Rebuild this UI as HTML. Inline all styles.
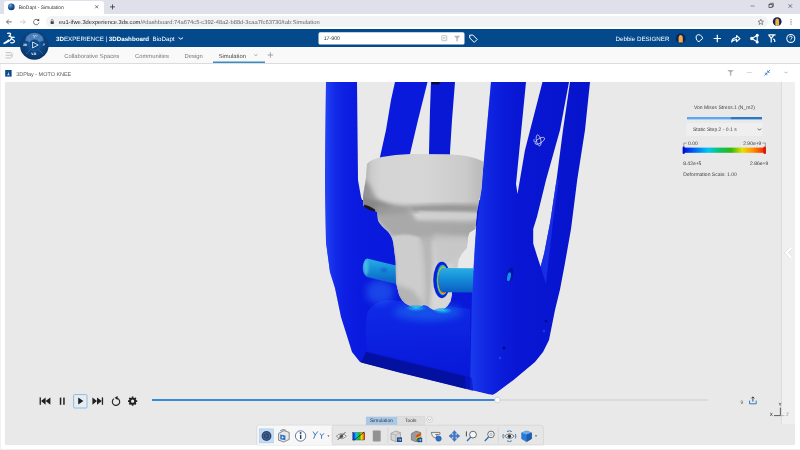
<!DOCTYPE html>
<html><head><meta charset="utf-8"><title>BioDapt - Simulation</title>
<style>
html,body{margin:0;padding:0;}
body{width:800px;height:450px;overflow:hidden;position:relative;background:#fff;font-family:"Liberation Sans",sans-serif;color:#333;text-rendering:geometricPrecision;}
.a{position:absolute;white-space:nowrap;line-height:1;}
#tabbar{left:0;top:0;width:800px;height:14.5px;background:#dee1e9;}
#tab{left:4px;top:1px;width:99.5px;height:13.5px;background:#fff;border-radius:3px 3px 0 0;}
#toolbar{left:0;top:14px;width:800px;height:15.5px;background:#fff;}
#pill{left:45.5px;top:15.9px;width:722px;height:11.3px;border-radius:6px;background:#f1f3f4;}
#hdr{left:0;top:29.2px;width:800px;height:17.8px;background:#03498b;}
#nav{left:0;top:47px;width:800px;height:16.6px;background:#f9f9f9;border-bottom:1px solid #dcdcdc;box-sizing:border-box;}
#view{left:5.1px;top:82px;width:790px;height:362.8px;background:#e9e9e9;}
#rstrip{left:781.2px;top:82px;width:13.5px;height:342px;background:#f0f0f0;border-left:1px solid #dcdcdc;box-sizing:border-box;}
.t5{font-size:5.4px;}
.t6{font-size:6.2px;}
.w{color:#fff;}
div.a:not(:empty){filter:grayscale(1);}
svg text{filter:grayscale(1);}
</style></head><body>
<div class="a" id="tabbar"></div>
<div class="a" id="tab"></div>
<div class="a" id="toolbar"></div>
<div class="a" id="pill"></div>
<div class="a" id="hdr"></div>
<div class="a" id="nav"></div>
<div class="a" id="view"></div>
<div class="a" id="rstrip"></div>
<div class="a" style="left:0;top:64px;width:1px;height:386px;background:#f1f1f1"></div>
<div class="a" style="left:0;top:448.7px;width:800px;height:1.3px;background:#efefef"></div>


<!-- CHROME UI -->
<svg class="a" style="left:0;top:0" width="800" height="82" viewBox="0 0 800 82">
<defs>
<radialGradient id="fav" cx="0.35" cy="0.3" r="0.8"><stop offset="0" stop-color="#6fa0d8"/><stop offset="0.5" stop-color="#1d5a9e"/><stop offset="1" stop-color="#0a2f66"/></radialGradient>
<radialGradient id="cmp" cx="0.5" cy="0.4" r="0.65"><stop offset="0" stop-color="#165a9c"/><stop offset="0.6" stop-color="#0b427e"/><stop offset="1" stop-color="#07305f"/></radialGradient>
</defs>
<!-- favicon -->
<circle cx="11.3" cy="6.9" r="3.3" fill="url(#fav)"/>
<!-- tab close -->
<path d="M95.2,5.3 l3,3 m0,-3 l-3,3" stroke="#444" stroke-width="0.7" fill="none"/>
<!-- new tab plus -->
<path d="M110,6.9 h5 m-2.5,-2.5 v5" stroke="#333" stroke-width="0.8" fill="none"/>
<!-- window controls -->
<path d="M750.5,6 h4" stroke="#555" stroke-width="0.6"/>
<rect x="769" y="4.3" width="3.2" height="3.2" fill="none" stroke="#333" stroke-width="0.7"/>
<path d="M770.2,4.3 v-1 h3.2 v3.2 h-1.2" fill="none" stroke="#333" stroke-width="0.6"/>
<path d="M788.5,4.2 l3.6,3.6 m0,-3.6 l-3.6,3.6" stroke="#333" stroke-width="0.6" fill="none"/>
<!-- nav arrows -->
<path d="M11.8,21.9 h-5.2 m2.3,-2.4 l-2.4,2.4 l2.4,2.4" stroke="#444" stroke-width="0.75" fill="none"/>
<path d="M20,21.9 h5.2 m-2.3,-2.4 l2.4,2.4 l-2.4,2.4" stroke="#bbb" stroke-width="0.75" fill="none"/>
<path d="M38.3,20.3 a2.7,2.7 0 1 0 0.6,2.3" stroke="#444" stroke-width="0.75" fill="none"/>
<path d="M39.2,18.6 v2.4 h-2.4 z" fill="#444"/>
<!-- lock -->
<rect x="50.6" y="21.2" width="3.2" height="2.7" rx="0.4" fill="#444"/>
<path d="M51.3,21.3 v-1 a0.9,0.9 0 0 1 1.8,0 v1" stroke="#444" stroke-width="0.55" fill="none"/>
<!-- star -->
<path d="M760.8,19.3 l0.8,1.8 l1.9,0.2 l-1.4,1.3 l0.4,1.9 l-1.7,-1 l-1.7,1 l0.4,-1.9 l-1.4,-1.3 l1.9,-0.2 z" fill="none" stroke="#444" stroke-width="0.6"/>
<!-- browser avatar -->
<circle cx="777.2" cy="21.6" r="4.4" fill="#12205c"/>
<path d="M775.3,25.4 v-4.6 a1.9,2.3 0 0 1 3.8,0 v4.6 z" fill="#f0b040"/>
<rect x="776" y="24.4" width="2.4" height="1.3" fill="#b8d090"/>
<!-- menu dots -->
<circle cx="791" cy="19.7" r="0.55" fill="#555"/><circle cx="791" cy="21.9" r="0.55" fill="#555"/><circle cx="791" cy="24.1" r="0.55" fill="#555"/>

<!-- header: 3DS logo -->
<g stroke="#fff" fill="none" stroke-width="1.25" stroke-linecap="round">
<path d="M7.6,33.4 q2.6,-0.8 3,0.6 q0.2,1.4 -2,2.4 q3,-0.4 2.8,1.8 q-0.6,2.6 -5.2,4.4 l-2.6,1 q3.6,-2.4 5,-3.6"/>
<path d="M14.2,37.4 q-2.4,-0.6 -2.6,0.8 q0,1 1.6,1.6 q1.6,0.8 1.2,2 q-0.8,1.4 -3.6,0.8"/>
</g>
<!-- compass -->
<circle cx="34.3" cy="45.5" r="14.3" fill="url(#cmp)"/>
<path d="M25.2,40.6 Q26.6,33.4 34.4,32.8 Q42.2,33.4 43.8,40.6 L39,42.2 A5.8,5.8 0 0 0 30,42.2 Z" fill="#5b8cc4" opacity="0.8"/>
<path d="M26.3,36.2 L30.6,40.8 M42.7,36.2 L38.4,40.8 M26.3,53.8 L30.6,49.2 M42.7,53.8 L38.4,49.2" stroke="#7fa8d6" stroke-width="0.45" opacity="0.8"/>
<circle cx="34.5" cy="45" r="5.6" fill="#0d4a8c" stroke="#2a6cb0" stroke-width="0.5"/>
<path d="M32.6,42 L38.2,45 L32.6,48 Z" fill="none" stroke="#fff" stroke-width="0.8" stroke-linejoin="round"/>
<text x="22.9" y="46.2" font-family="Liberation Sans, sans-serif" font-size="3.3" font-weight="bold" fill="#fff">3D</text>
<text x="31.2" y="55" font-family="Liberation Sans, sans-serif" font-size="3.3" font-weight="bold" fill="#fff">V.R</text>
<text x="42.8" y="46.2" font-family="Liberation Sans, sans-serif" font-size="3.3" font-weight="bold" font-style="italic" fill="#dfe8f4">i²</text>
<path d="M33,35 l1.2,1.6 l1.4,-1.8 m-1.4,1.8 v1.6 M35.6,35.4 l0.8,1 l1,-1.2" stroke="#fff" stroke-width="0.5" fill="none"/>
<!-- search box -->
<rect x="318.5" y="32.3" width="146" height="12.3" rx="1.6" fill="#fff"/>
<rect x="441.8" y="35.7" width="5" height="5" rx="0.6" fill="none" stroke="#b5b5b5" stroke-width="0.8"/>
<path d="M443,36.9 l2.6,2.6 m0,-2.6 l-2.6,2.6" stroke="#b5b5b5" stroke-width="0.7"/>
<path d="M454,35.8 h6.2 l-2.4,2.6 v2.8 h-1.4 v-2.8 z" fill="#b5b5b5"/>
<!-- tag -->
<path d="M469.6,35.2 l3.2,-0.2 l4.4,4.4 l-3,3 l-4.4,-4.4 z" fill="none" stroke="#fff" stroke-width="1" stroke-linejoin="round"/>
<!-- dropdown chevron after BioDapt -->
<path d="M178.6,37.6 l2.2,1.6 l2.2,-1.6" stroke="#fff" stroke-width="1" fill="none"/>
<!-- header avatar -->
<circle cx="680.7" cy="38.5" r="4.9" fill="#12205c"/>
<path d="M678.6,42.6 v-5 a2.1,2.5 0 0 1 4.2,0 v5 z" fill="#f0b040"/>
<!-- bell/notification -->
<path d="M696.2,36 q1.8,-2.4 4.2,-0.8 q2.2,1.4 2.2,3.2 q-0.4,1.2 -1.8,1.4 l-1.4,1.8 q-1.6,0 -2.6,-1.4 q-1,-2.2 -0.6,-4.2 z" fill="none" stroke="#fff" stroke-width="1" stroke-linejoin="round"/>
<!-- plus -->
<path d="M713.6,38.5 h7.4 m-3.7,-3.7 v7.4" stroke="#fff" stroke-width="1.2" fill="none"/>
<!-- share arrow -->
<path d="M731.6,42 q0.6,-4.2 5,-4.4 v-2 l3.4,3 l-3.4,3 v-2 q-3,-0.2 -5,2.4 z" fill="none" stroke="#fff" stroke-width="1.15" stroke-linejoin="round"/>
<!-- network -->
<path d="M751.6,38.5 l5.6,-3 m-5.6,3 l5.6,3.2 m0,-6.2 v6.2" stroke="#fff" stroke-width="1.1" fill="none"/>
<circle cx="751.8" cy="38.5" r="1.7" fill="#fff"/><circle cx="757.2" cy="35.3" r="1.5" fill="#fff"/><circle cx="757.2" cy="41.9" r="1.5" fill="#fff"/>
<!-- Y tools -->
<path d="M768.6,34.8 l2.6,3.6 v4 m0,-4 l2.8,-3.6 m-5.6,0 h7.2 m-2.4,4.4 q1.8,0.2 1.6,2.8" stroke="#fff" stroke-width="1.2" fill="none"/>
<!-- help -->
<circle cx="790.8" cy="38.5" r="4" fill="none" stroke="#fff" stroke-width="1.05"/>
<path d="M789.5,37.4 a1.3,1.3 0 1 1 1.9,1.2 q-0.6,0.4 -0.6,1.1" stroke="#fff" stroke-width="1" fill="none"/><circle cx="790.8" cy="40.9" r="0.45" fill="#fff"/>
<!-- nav row: hamburger -->
<path d="M5.6,52.6 h5 q1.6,0.2 1.7,2.6 q-0.1,2.4 -1.7,2.7 h-5 m0,-2.65 h6" stroke="#aaa" stroke-width="0.7" fill="none"/>
<!-- active tab underline -->
<rect x="213" y="61.5" width="52" height="1.5" fill="#368ec4"/>
<path d="M254.2,54.4 l1.6,1.3 l1.6,-1.3" stroke="#777" stroke-width="0.6" fill="none"/>
<path d="M267.6,55 h5.6 m-2.8,-2.8 v5.6" stroke="#888" stroke-width="0.7" fill="none"/>
<!-- widget header -->
<rect x="5.2" y="70" width="6.4" height="6.6" fill="#0d4a8c"/>
<path d="M7,75.2 q1.2,-0.4 1.4,-3.6 q0.2,3.2 1.6,3.6 z" fill="#cfe0f4"/>
<path d="M727.4,69.9 h6.4 l-2.5,2.6 v3.3 h-1.4 v-3.3 z" fill="#b4b4b4"/>
<path d="M746.8,72.6 h5" stroke="#c4c4c4" stroke-width="0.7"/>
<path d="M764.4,75.6 l2.4,-2.4 m0.9,-0.9 l2.4,-2.4 M764.8,73.2 h2 v2 M767.7,70.3 v2 h2" stroke="#2a7cc4" stroke-width="0.8" fill="none"/>
<path d="M784.4,72 q1.7,1.9 3.4,0" stroke="#999" stroke-width="0.6" fill="none"/>
</svg>

<!-- MODEL -->
<svg class="a" id="model" style="left:0;top:0" width="800" height="450" viewBox="0 0 800 450">
<defs>
<linearGradient id="gblue" x1="326" y1="0" x2="590" y2="0" gradientUnits="userSpaceOnUse">
<stop offset="0" stop-color="#1228ec"/><stop offset="0.12" stop-color="#0a1ade"/><stop offset="0.6" stop-color="#0918d8"/><stop offset="1" stop-color="#0714cc"/>
</linearGradient>
<linearGradient id="gcup" x1="362" y1="0" x2="484" y2="0" gradientUnits="userSpaceOnUse">
<stop offset="0" stop-color="#c2c2c2"/><stop offset="0.15" stop-color="#d4d4d4"/><stop offset="0.5" stop-color="#d6d6d6"/><stop offset="0.85" stop-color="#cacaca"/><stop offset="1" stop-color="#b8b8b8"/>
</linearGradient>
<linearGradient id="gcupv" x1="0" y1="156" x2="0" y2="240" gradientUnits="userSpaceOnUse">
<stop offset="0" stop-color="#000" stop-opacity="0"/><stop offset="0.45" stop-color="#000" stop-opacity="0.02"/><stop offset="0.62" stop-color="#000" stop-opacity="0.18"/><stop offset="0.8" stop-color="#000" stop-opacity="0.08"/><stop offset="1" stop-color="#000" stop-opacity="0.03"/>
</linearGradient>
<linearGradient id="gpin" x1="0" y1="0" x2="0" y2="1">
<stop offset="0" stop-color="#2aaee4"/><stop offset="0.4" stop-color="#1690d8"/><stop offset="1" stop-color="#0a5cc4"/>
</linearGradient>
<radialGradient id="gglow" cx="0.5" cy="0.3" r="0.6">
<stop offset="0" stop-color="#20d8e8" stop-opacity="0.95"/><stop offset="0.5" stop-color="#1490ee" stop-opacity="0.6"/><stop offset="1" stop-color="#0b30e0" stop-opacity="0"/>
</radialGradient>
</defs>
<!-- silhouette -->
<path fill="url(#gblue)" d="M326,82 L590,82 L585,130 L577.2,180 L571,229 L565,263 L560,289.5 L555,310 L549,340 L543,352 L535,362 L513.5,380 L496,393 L492.8,394.8 L489,394.2 L440,382.2 L400,372.3 L360,362 L352,352 L341,317 L335,288 L330,272 L326,242 L325,180 Z"/>
<!-- inner opening -->
<path fill="#e9e9e9" d="M357,82 L491,82 L484,160 L480,200 L362,200 L361,197 L358,180 Z"/>
<!-- back beams -->
<path fill="#0a1adc" d="M395,82 L427.5,82 L418,120 L410,154 L408,165 L378,165 L380,157 L386,130 L391,100 Z"/>
<path fill="#0918d4" d="M431,82 L455,82 L452,120 L450,152 L450,165 L429,165 L429,152 L430,110 Z"/>
<path fill="#05082a" d="M431.5,82 L440,82 L439,84.6 L432,84.2 Z"/>
<!-- right plate windows -->
<path fill="#e9e9e9" d="M526,82 L542.5,82 L525,150 L517.5,194 L516,184 Z"/>
<path fill="#e9e9e9" d="M569,82 L570,82 L563,130 L556.5,180 L550.3,221.6 L544.2,253.3 L540.6,266.8 L537,255.8 L533.2,243.6 L533.2,229 L537,216.7 L546,180 L560,130 Z"/>
<path fill="#1c36ec" opacity="0.75" d="M556.5,180 L550.3,221.6 L544.2,253.3 L540.6,266.8 L546,284 L548.4,262 L553,222 L558.6,180 Z"/>
<!-- inner dark face of window -->

<!-- bg gap right of stem -->
<path fill="#e9e9e9" d="M476.2,226 L473.6,270 L450,270 L449,262 L455,256 L459,250 L463,244 L464,235 L466,229 Z"/>
<!-- lower drum lighter zone -->
<linearGradient id="gdrum" x1="0" y1="300" x2="0" y2="372" gradientUnits="userSpaceOnUse"><stop offset="0" stop-color="#1638f0" stop-opacity="0.6"/><stop offset="0.5" stop-color="#1030e8" stop-opacity="0.4"/><stop offset="1" stop-color="#0b20dc" stop-opacity="0.15"/></linearGradient>
<path fill="url(#gdrum)" d="M367,314 Q372,301 390,300 L470,309 L470,374 L367,351 Q364,330 367,314 Z"/>
<!-- right plate highlight -->
<linearGradient id="gpl" x1="472" y1="0" x2="520" y2="0" gradientUnits="userSpaceOnUse"><stop offset="0" stop-color="#2048f4" stop-opacity="0.7"/><stop offset="0.4" stop-color="#1838ee" stop-opacity="0.35"/><stop offset="1" stop-color="#0b20dc" stop-opacity="0"/></linearGradient>
<path fill="url(#gpl)" d="M491,82 L526,82 L516,184 L520,260 L520,375 L493,394.6 L470,389.6 L472,292 L475,242 L481,192 Z"/>
<!-- left beam highlight -->
<linearGradient id="glb" x1="325" y1="0" x2="345" y2="0" gradientUnits="userSpaceOnUse"><stop offset="0" stop-color="#2448f6" stop-opacity="0.9"/><stop offset="1" stop-color="#0b20dc" stop-opacity="0"/></linearGradient>
<path fill="url(#glb)" d="M326,82 L345,82 L345,240 L350,280 L372,365 L360,362 L352,352 L341,317 L335,288 L330,272 L326,242 L325,180 Z"/>
<!-- glow near left pin base -->
<ellipse cx="380" cy="292" rx="14" ry="12" fill="#2a70f4" opacity="0.5" filter="url(#b3)"/>
<!-- dark band bottom -->
<path fill="#0411a0" d="M366,352 L465,376 L466,389 L440,382.6 L400,372.8 L361,362.6 Z"/>
<path fill="#0612b4" opacity="0.6" d="M465,376 L472,378 L473,391 L466,389 Z"/>
<ellipse cx="428" cy="312" rx="34" ry="9" fill="#1a70f0" opacity="0.55" filter="url(#b3)"/>
<!-- pin left -->
<path fill="url(#gpin)" d="M367,258.5 L398,266 L398,284.5 L367,277 Q362.5,274 362.8,267 Q363.5,260 367,258.5 Z"/>
<clipPath id="cpinl"><path d="M367,258.5 L398,266 L398,284.5 L367,277 Q362.5,274 362.8,267 Q363.5,260 367,258.5 Z"/></clipPath><g clip-path="url(#cpinl)"><ellipse cx="366" cy="267.5" rx="2.6" ry="8" fill="#5cc4ec" opacity="0.7" filter="url(#b1)"/></g>
<ellipse cx="384" cy="270" rx="3" ry="2" fill="#0a50d0" opacity="0.6" filter="url(#b1)"/>
<!-- gray piece -->
<clipPath id="cgray"><path d="M367,164 Q370,159.5 381.7,157 Q395,154.3 410.5,154 L448,154.3 Q462,155 470.5,157 Q479,159 483.5,162 L481.7,189 L477,212 L475.5,229 L469.5,232.5 L468,237 L467,247.7 L462,253.5 L458.7,259.4 L457.5,268 L452,268 L452,294.4 L450.5,301.4 Q448,306 444.7,308.4 Q441,311 437.7,310.7 Q433,310 430.7,308.4 Q427,305 423.7,305 Q420,307.5 415.5,307 Q410,306.5 406,303.7 Q401,300 399,294.4 L396,282.7 L395.7,261.7 L393.3,243 Q392.5,237 388,231.7 Q380,225 378,220.5 L377,211.7 L375,211 L364,206 L363,205 L363,196 L366,178 Z"/></clipPath>
<filter id="b2" x="-20%" y="-20%" width="140%" height="140%"><feGaussianBlur stdDeviation="2"/></filter>
<filter id="b1" x="-20%" y="-20%" width="140%" height="140%"><feGaussianBlur stdDeviation="1"/></filter>
<filter id="b3" x="-30%" y="-30%" width="160%" height="160%"><feGaussianBlur stdDeviation="3.5"/></filter>
<path fill="url(#gcup)" d="M367,164 Q370,159.5 381.7,157 Q395,154.3 410.5,154 L448,154.3 Q462,155 470.5,157 Q479,159 483.5,162 L481.7,189 L477,212 L475.5,229 L469.5,232.5 L468,237 L467,247.7 L462,253.5 L458.7,259.4 L457.5,268 L452,268 L452,294.4 L450.5,301.4 Q448,306 444.7,308.4 Q441,311 437.7,310.7 Q433,310 430.7,308.4 Q427,305 423.7,305 Q420,307.5 415.5,307 Q410,306.5 406,303.7 Q401,300 399,294.4 L396,282.7 L395.7,261.7 L393.3,243 Q392.5,237 388,231.7 Q380,225 378,220.5 L377,211.7 L375,211 L364,206 L363,205 L363,196 L366,178 Z"/>
<g clip-path="url(#cgray)">
<!-- left darker edge of cup -->
<path fill="#a8a8a8" opacity="0.55" filter="url(#b2)" d="M362,160 L369,160 L367,205 L360,205 Z"/>
<path fill="#868686" filter="url(#b2)" opacity="0.75" d="M361,197 L372,200 L395,205 L412,207 L404,214 L380,214 L364,208 Z"/>
<path fill="#7c7c7c" filter="url(#b2)" opacity="0.6" d="M361,178 L369,184 L376,198 L392,208 L380,215 L361,208 Z"/>
<!-- shadow under cup body -->
<path fill="#8a8a8a" filter="url(#b2)" opacity="0.85" d="M408,206 Q440,203 480,205 L479,212 L412,212 Z"/>
<!-- darker lower section -->
<path fill="#9e9e9e" filter="url(#b2)" opacity="0.8" d="M376,205 L410,208 L416,220 L478,222 L476,240 L395,240 Q384,228 376,220 Z"/>
<!-- light ridge -->
<path fill="#cfcfcf" filter="url(#b1)" opacity="0.9" d="M418,211.5 L479,213 L478,219 L422,217.5 Z"/>
<!-- stem front (left) face light -->
<path fill="#cdcdcd" filter="url(#b1)" d="M392,236 Q408,232 421,238 Q425,270 424,305 L415,309 L404,304 L397,290 L395,262 Z"/>
<!-- ridge shadow between faces -->
<path fill="#b4b4b4" filter="url(#b2)" opacity="0.9" d="M420,236 L432,236 Q433,262 432,285 L430,309 L424,306 Q426,270 420,236 Z"/>
<!-- right face -->
<path fill="#c6c6c6" filter="url(#b2)" opacity="0.8" d="M432,234 L470,236 L466,250 L452,264 L436,262 Z"/>
<path fill="#d8d8d8" filter="url(#b2)" opacity="0.9" d="M434,266 L452,264 L453,300 L444,310 L432,309 Z"/>
<path fill="#aaaaaa" filter="url(#b2)" opacity="0.7" d="M396,284 L412,290 L424,304 L415,309 L404,305 L397,294 Z"/>
<!-- left stem edge shadow -->
<path fill="#9d9d9d" filter="url(#b1)" opacity="0.7" d="M393,243 L396,262 L396.5,283 L399,294 L406,304 L404,306 L396,296 L393.5,283 L393,262 Z"/>
</g>
<!-- cup shadow under rim -->
<path fill="#1e1414" d="M364.2,204.5 Q369,205.5 375,209.5 L375.2,211.6 Q369,210.5 364.2,207 Z"/>
<!-- ring -->
<ellipse cx="441.8" cy="280" rx="8.6" ry="18.2" fill="#0a22d8"/>
<ellipse cx="442.6" cy="280" rx="6.0" ry="15.2" fill="#18b0ec"/>
<ellipse cx="443" cy="280.2" rx="5.8" ry="14.3" fill="#35c84a"/>
<ellipse cx="443.3" cy="280.4" rx="5.7" ry="13.6" fill="#e8d820"/>
<ellipse cx="443.5" cy="280.6" rx="5.6" ry="13" fill="#e85818"/>
<!-- pin right -->
<path fill="url(#gpin)" d="M443.6,268 L473.6,268.2 L472.6,292.6 L443.6,292.2 A5.5,12.1 0 0 1 443.6,268 Z"/>
<!-- glow under knuckle -->
<ellipse cx="416" cy="309.5" rx="12" ry="4.2" fill="url(#gglow)"/>
<ellipse cx="443" cy="312" rx="11" ry="4" fill="url(#gglow)"/>
<!-- hole in right plate -->
<ellipse cx="510" cy="275" rx="3.1" ry="7.4" fill="#0612a8" transform="rotate(12 510 275)"/>
<ellipse cx="509.4" cy="277" rx="1.8" ry="4.6" fill="#1690e8" transform="rotate(12 510 275)"/>
<!-- small holes -->
<circle cx="504" cy="348" r="1.4" fill="#040c80"/>
<circle cx="546" cy="321" r="1.3" fill="#040c80"/>
<circle cx="500" cy="358" r="1.3" fill="#2a50f0" opacity="0.7"/>
<circle cx="544" cy="331" r="1.3" fill="#2a50f0" opacity="0.6"/>
<!-- cursor -->
<g fill="none" stroke="#e8e8f0" stroke-width="0.7">
<ellipse cx="538.6" cy="140.4" rx="2.2" ry="5.6" transform="rotate(-12 538.6 140.4)"/>
<ellipse cx="539.8" cy="140.8" rx="5.4" ry="2.3" transform="rotate(-32 539.8 140.8)"/>
<path d="M534.2,139.2 q-0.8,1.4 0.2,2.8"/>
</g>
<circle cx="539.4" cy="140.3" r="0.6" fill="#0a0a50"/>
</svg>


<!-- VIEW UI -->
<svg class="a" style="left:0;top:82px" width="800" height="368" viewBox="0 82 800 368">
<defs>
<linearGradient id="rain" x1="0" y1="0" x2="1" y2="0"><stop offset="0" stop-color="#0010e0"/><stop offset="0.12" stop-color="#0060f0"/><stop offset="0.3" stop-color="#00c8f0"/><stop offset="0.45" stop-color="#10c060"/><stop offset="0.58" stop-color="#30b810"/><stop offset="0.72" stop-color="#e8e000"/><stop offset="0.85" stop-color="#ff9000"/><stop offset="1" stop-color="#f02000"/></linearGradient>
</defs>
<!-- legend -->
<rect x="687" y="117" width="43.5" height="2.4" fill="#5aa8f0"/>
<rect x="730.5" y="117" width="31.5" height="2.4" fill="#2a78c8"/>
<rect x="686.4" y="123" width="76" height="13" fill="#efefef"/>
<path d="M757.8,128.6 l1.6,1.6 l1.6,-1.6" stroke="#222" stroke-width="0.7" fill="none"/>
<path d="M683.8,147 v-4 h3 M765.4,147 v-4 h-3" stroke="#555" stroke-width="0.5" fill="none"/>
<rect x="684" y="147.6" width="81" height="5.2" fill="url(#rain)"/>
<rect x="682.6" y="146.6" width="2.2" height="7.4" rx="1.1" fill="#0010d0"/>
<rect x="763.4" y="146.6" width="2.6" height="7.4" rx="1.3" fill="#e01800"/>
<!-- right strip arrow -->
<path d="M791.4,247.5 l-5,5.3 l5,5.3" stroke="#d8d8d8" stroke-width="3.2" fill="none" stroke-linejoin="miter"/><path d="M791.4,247.5 l-5,5.3 l5,5.3" stroke="#fff" stroke-width="2.3" fill="none" stroke-linejoin="miter"/>

<!-- playback -->
<g fill="#222">
<rect x="39.6" y="397.4" width="1.3" height="7.4"/><path d="M45.6,397.4 v7.4 l-4.6,-3.7 z M50.4,397.4 v7.4 l-4.8,-3.7 z"/>
<rect x="59.8" y="397.6" width="1.5" height="7.2"/><rect x="63.2" y="397.6" width="1.5" height="7.2"/>
<path d="M78.2,397.6 v7 l5.2,-3.5 z"/>
<path d="M92.4,397.4 v7.4 l4.6,-3.7 z M97,397.4 v7.4 l4.8,-3.7 z"/><rect x="101.8" y="397.4" width="1.3" height="7.4"/>
</g>
<rect x="73.6" y="394.6" width="13.4" height="13.4" rx="1" fill="#e4ecf4" stroke="#5a9ad8" stroke-width="0.6"/>
<path d="M78.2,397.6 v7 l5.2,-3.5 z" fill="#222"/>
<path d="M117.2,398.2 a3.7,3.7 0 1 1 -3.2,0.4" stroke="#222" stroke-width="1.1" fill="none"/>
<path d="M117.6,396 v4 l-3,-2.2 z" fill="#222"/>
<g transform="translate(132.6,401.2)"><circle r="2.6" fill="none" stroke="#222" stroke-width="1.9"/><g stroke="#222" stroke-width="1.7"><path d="M0,-4.6 v2 M0,4.6 v-2 M-4.6,0 h2 M4.6,0 h-2 M-3.25,-3.25 l1.4,1.4 M3.25,3.25 l-1.4,-1.4 M-3.25,3.25 l1.4,-1.4 M3.25,-3.25 l-1.4,1.4"/></g></g>
<rect x="152" y="399" width="346" height="2" fill="#3a8ad8"/>
<rect x="498" y="399.3" width="210" height="1.4" fill="#d4d4d4"/>
<circle cx="497.4" cy="400" r="2.8" fill="#fafafa" stroke="#b4b4b4" stroke-width="0.5"/>
<!-- export icon -->
<path d="M749.6,400.6 v3.2 h6.6 v-3.2" stroke="#2a7cc4" stroke-width="1" fill="none"/>
<path d="M752.9,401.6 v-4.6 m-1.5,1.4 l1.5,-1.6 l1.5,1.6" stroke="#222" stroke-width="0.8" fill="none"/>
<!-- axes -->
<path d="M780.4,407.6 v8 h-6.4" stroke="#222" stroke-width="0.7" fill="none"/>
<path d="M780.4,415.6 h4" stroke="#888" stroke-width="0.5"/>
<!-- bottom tabs -->
<rect x="365.9" y="416.7" width="31.3" height="8.5" fill="#a8c8e8"/>
<rect x="397.2" y="416.7" width="27.2" height="8.5" fill="#dedede" stroke="#cfcfcf" stroke-width="0.5"/>
<circle cx="429.6" cy="419.6" r="2.9" fill="#f4f4f4" stroke="#aaa" stroke-width="0.4"/>
<path d="M427.9,418.8 l1.7,1.6 l1.7,-1.6" stroke="#888" stroke-width="0.6" fill="none"/>
<!-- bottom toolbar -->
<path d="M257,445 V425.2 H540.4 Q543.4,425.2 543.4,428.2 V445 Z" fill="#e6e6e6" stroke="#cdcdcd" stroke-width="0.6"/>
<rect x="257.3" y="425.5" width="74.6" height="19.5" fill="#f7f7f7"/>
<path d="M332.1,427 v16 M387.8,427 v16 M426.2,427 v16 M498.4,427 v16" stroke="#cfcfcf" stroke-width="0.6"/>
<!-- 1 play selected -->
<rect x="259.4" y="428.9" width="14" height="14" fill="#c4dcf4" stroke="#9cc4ec" stroke-width="0.5"/>
<circle cx="266.5" cy="436" r="4.9" fill="#2b4570"/>
<circle cx="266.5" cy="436" r="3.3" fill="none" stroke="#6a86b0" stroke-width="0.5"/>
<path d="M265.4,434 v4 l3,-2 z" fill="#41618f"/>
<!-- 2 film cube -->
<path d="M278.6,433.4 l5.4,-2.8 l5.2,1.8 v7 l-5.4,2.6 l-5.2,-1.8 z" fill="#e8e8e8" stroke="#444" stroke-width="0.6"/>
<path d="M280.2,434.6 l5.2,1 v4.6 l-5.2,-1 z" fill="#2a78d0"/>
<path d="M281.8,436 v2.4 l2,-0.9 z" fill="#fff"/>
<path d="M280,431 l2.6,-1.6 l3.6,0.8" stroke="#444" stroke-width="0.5" fill="#9ab8e0"/>
<!-- 3 info -->
<circle cx="300.6" cy="436" r="5.2" fill="#fff" stroke="#2b4570" stroke-width="0.7"/>
<rect x="299.9" y="434.8" width="1.5" height="4.2" fill="#2b4570"/><circle cx="300.6" cy="433" r="0.95" fill="#2b4570"/>
<!-- 4 Yr -->
<path d="M313,431.6 l2.2,3.4 l2.6,-3.6 m-2.6,3.6 l-1.6,3.8 M320.2,433.4 l1.4,2.4 v3 m0,-3 l2.6,-2.6" stroke="#2a6cc0" stroke-width="0.9" fill="none"/>
<path d="M327.4,435.6 h2 l-1,1.2 z" fill="#222"/>
<!-- 5 eye slash -->
<path d="M336.4,436.2 q5,-5 10,0 q-5,5 -10,0 z" fill="#f4f4f4" stroke="#555" stroke-width="0.6"/>
<circle cx="341.4" cy="436.2" r="1.9" fill="#666"/>
<path d="M337.6,440 l8,-8" stroke="#222" stroke-width="0.7"/>
<!-- 6 rainbow -->
<rect x="352.8" y="432.6" width="12" height="7.4" fill="url(#rain)" stroke="#333" stroke-width="0.4"/>
<path d="M353.6,440.6 l10.6,-8.6" stroke="#222" stroke-width="0.8"/>
<!-- 7 gray rect -->
<rect x="372.8" y="430.4" width="7.9" height="11.2" rx="0.8" fill="#929292"/>
<!-- 8 cube icon -->
<path d="M391,433.4 l4.6,-2.4 l4.8,1.6 v6.4 l-4.6,2.6 l-4.8,-1.8 z" fill="#d4d4d4" stroke="#777" stroke-width="0.5"/>
<path d="M391,433.4 l4.8,1.8 l4.6,-2.6 M395.8,435.2 v6.4" stroke="#888" stroke-width="0.4" fill="none"/>
<rect x="397" y="437.4" width="5" height="4.6" fill="#1c4a90"/><path d="M398,439.8 h3 m-1.2,-1.2 l1.2,1.2 l-1.2,1.2" stroke="#fff" stroke-width="0.5" fill="none"/>
<!-- 9 cube colored -->
<path d="M411.4,433.6 l4.6,-2.6 l4.8,1.6 v6.6 l-4.6,2.6 l-4.8,-1.8 z" fill="#9a9a9a" stroke="#555" stroke-width="0.5"/>
<path d="M416.2,435.4 l4.6,-2.6 v6.4 l-4.6,2.6 z" fill="#e8c020"/>
<path d="M416.2,435.4 l4.6,-2.6 v2.4 l-4.6,2.6 z" fill="#e04020"/>
<path d="M416.2,439.4 l4.6,-2.6 v2.4 l-4.6,2.6 z" fill="#30a040"/>
<rect x="417.4" y="437.8" width="4.8" height="4.4" fill="#1c4a90"/><path d="M418.4,440 h2.8 m-1.2,-1.2 l1.2,1.2 l-1.2,1.2" stroke="#fff" stroke-width="0.5" fill="none"/>
<!-- 10 hand -->
<path d="M431.4,432.4 h7.4 q1.4,0 1.4,1 q0,1 -1.4,1 h-3.2 q1.8,1 1.6,3.2 h-3 q-2.6,-1 -2.8,-5.2 z" fill="#f0f0f0" stroke="#333" stroke-width="0.6"/>
<circle cx="438.6" cy="438.6" r="2.7" fill="#2a70c8" stroke="#1c4a90" stroke-width="0.5"/>
<!-- 11 move -->
<path d="M454.4,430.6 l2.2,2.6 h-1.4 v2 h2 v-1.4 l2.6,2.2 l-2.6,2.2 v-1.4 h-2 v2 h1.4 l-2.2,2.6 l-2.2,-2.6 h1.4 v-2 h-2 v1.4 l-2.6,-2.2 l2.6,-2.2 v1.4 h2 v-2 h-1.4 z" fill="#3a80d8" stroke="#1c4a90" stroke-width="0.4"/>
<!-- 12 zoom fit -->
<circle cx="473" cy="434.6" r="3.4" fill="#f4f8fc" stroke="#333" stroke-width="0.7"/>
<path d="M470.6,437.2 l-3.6,3.8" stroke="#2a6cc0" stroke-width="1.3"/>
<path d="M466.4,431.4 v5" stroke="#222" stroke-width="0.8"/>
<!-- 13 zoom -->
<circle cx="491" cy="434.4" r="3.3" fill="#f4f8fc" stroke="#333" stroke-width="0.7"/>
<circle cx="491" cy="434.4" r="1.2" fill="none" stroke="#555" stroke-width="0.4"/>
<path d="M488.6,437 l-3.8,4" stroke="#2a6cc0" stroke-width="1.3"/>
<!-- 14 eye arrows -->
<path d="M504.6,436.2 q4.8,-4.6 9.6,0 q-4.8,4.6 -9.6,0 z" fill="#f4f4f4" stroke="#333" stroke-width="0.6"/>
<circle cx="509.4" cy="436.2" r="1.7" fill="#333"/>
<path d="M507,431.6 q2.4,-1.6 4.8,0 M507,440.8 q2.4,1.6 4.8,0 M503.4,434 q-1,2.2 0,4.4 M515.4,434 q1,2.2 0,4.4" stroke="#2a6cc0" stroke-width="0.9" fill="none"/>
<!-- 15 blue cube -->
<path d="M521.6,432.8 l5,-1.8 l5,1.8 v6 l-5,3 l-5,-3 z" fill="#2a7cd8" stroke="#1c4a90" stroke-width="0.4"/>
<path d="M521.6,432.8 l5,1.8 l5,-1.8 l-5,-1.8 z" fill="#6ab0f0"/>
<path d="M526.6,434.6 v7.2 l5,-3 v-6 z" fill="#1c5cb0"/>
<path d="M535,435.6 h2 l-1,1.2 z" fill="#222"/>
</svg>
<div class="a" style="left:778.6px;top:403.4px;font-size:4.6px;color:#222">Y</div>
<div class="a" style="left:769.8px;top:413.3px;font-size:4.6px;color:#222">X</div>
<div class="a" style="left:786px;top:413.3px;font-size:4.6px;color:#999">Z</div>

<!-- TEXT -->
<div class="a" style="left:18.7px;top:6.9px;color:#333;font-size:4.95px">BioDapt - Simulation</div>
<div class="a" style="left:59px;top:21.2px;color:#666;font-size:5.78px"><span style="color:#222">eu1-ifwe.3dexperience.3ds.com</span>/#dashboard:74a674c5-c392-48a2-b88d-3caa7fc63730/tab:Simulation</div>
<div class="a w" style="left:56px;top:36.7px;font-size:6.2px;"><b>3D</b>EXPERIENCE | <b>3DDashboard</b>&nbsp; BioDapt</div>
<div class="a" style="left:323.7px;top:36.5px;color:#333;font-size:5.25px">17-900</div>
<div class="a w" style="left:615.5px;top:36.7px;font-size:6.23px;">Debbie DESIGNER</div>
<div class="a" style="left:64.2px;top:54.8px;color:#777;font-size:5.83px">Collaborative Spaces</div>
<div class="a" style="left:135px;top:54.8px;color:#777;font-size:5.83px">Communities</div>
<div class="a" style="left:184.5px;top:54.8px;color:#777;font-size:5.83px">Design</div>
<div class="a" style="left:218.7px;top:54.8px;color:#444;font-size:5.83px">Simulation</div>
<div class="a" style="left:16.2px;top:72.8px;color:#555;font-size:5.46px">3DPlay - MOTO KNEE</div>
<div class="a" style="left:694px;top:105.5px;color:#444;font-size:5px">Von Mises Stress.1 (N_m2)</div>
<div class="a" style="left:693px;top:128.4px;color:#444;font-size:5px">Static Step.2 - 0.1 s</div>
<div class="a" style="left:688px;top:141.8px;color:#333;font-size:5px">0.00</div>
<div class="a" style="left:743.2px;top:141.8px;color:#333;font-size:5px">2.90e+9</div>
<div class="a" style="left:683.2px;top:161.9px;color:#333;font-size:5px">8.42e+5</div>
<div class="a" style="left:750px;top:161.9px;color:#333;font-size:5px">2.86e+9</div>
<div class="a" style="left:683.2px;top:173.4px;color:#444;font-size:5px">Deformation Scale: 1.00</div>
<div class="a" style="left:370px;top:420.2px;color:#333;font-size:4.9px">Simulation</div>
<div class="a" style="left:405px;top:420.2px;color:#333;font-size:4.9px">Tools</div>
<div class="a" style="left:740.5px;top:401px;color:#555;font-size:5px">9</div>
</body></html>
